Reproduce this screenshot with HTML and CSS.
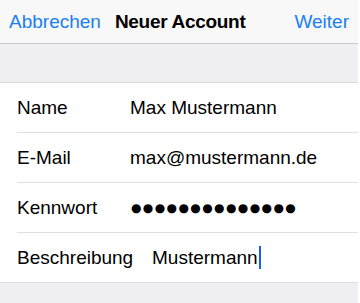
FILE: index.html
```html
<!DOCTYPE html>
<html lang="de">
<head>
    <meta charset="UTF-8">
    <meta name="viewport" content="width=device-width, initial-scale=1.0">
    <title>Neuer Account</title>
    <link rel="stylesheet" href="styles.css">
</head>
<body>

    <div class="screen">
        <!-- Navigation Bar -->
        <div class="navbar">
            <a class="nav-btn">Abbrechen</a>
            <span class="nav-title">Neuer Account</span>
            <a class="nav-btn right">Weiter</a>
        </div>

        <div class="spacer"></div>

        <!-- Account Form -->
        <div class="form">
            <div class="row">
                <span class="label">Name</span>
                <span class="value">Max Mustermann</span>
            </div>
            <div class="row">
                <span class="label">E-Mail</span>
                <span class="value">max@mustermann.de</span>
            </div>
            <div class="row">
                <span class="label">Kennwort</span>
                <span class="value dots">●●●●●●●●●●●●●●</span>
            </div>
            <div class="row">
                <span class="label wide">Beschreibung</span>
                <span class="value">Mustermann<span class="cursor"></span></span>
            </div>
        </div>

        <div class="footer"></div>
    </div>

</body>
</html>
```

FILE: styles.css
```css
body {
    font-family: 'Liberation Sans', Arial, sans-serif;
    margin: 0;
    padding: 0;
    background-color: #fff;
}
.screen {
    width: 358px;
    height: 303px;
    background: #efeff4;
    overflow: hidden;
}
.navbar {
    display: flex;
    align-items: center;
    height: 43px;
    padding: 0 9px 0 9px;
    background: #f8f8f8;
    border-bottom: 1px solid #c9c9cd;
    font-size: 19px;
}
.nav-btn {
    color: #1a7ef5;
    cursor: pointer;
}
.nav-btn.right {
    margin-left: auto;
}
.nav-title {
    margin-left: 14px;
    font-weight: bold;
    letter-spacing: -0.3px;
    color: #000;
}
.spacer {
    height: 38px;
    border-bottom: 1px solid #d8d8dc;
}
.form {
    background: #fff;
    padding-left: 17px;
    border-bottom: 1px solid #dcdce0;
}
.row {
    display: flex;
    align-items: center;
    height: 49px;
    font-size: 19px;
    color: #000;
}
.row + .row {
    border-top: 1px solid #e0e0e0;
}
.label {
    width: 113px;
}
.label.wide {
    width: 135px;
}
.value {
    display: flex;
    align-items: center;
}
.dots {
    font-family: 'DejaVu Sans', sans-serif;
    font-size: 12px;
    letter-spacing: 1.4px;
    margin-left: 1px;
}
.cursor {
    display: inline-block;
    width: 2px;
    height: 23px;
    background: #1b5cf0;
    margin-left: 1px;
}
```
